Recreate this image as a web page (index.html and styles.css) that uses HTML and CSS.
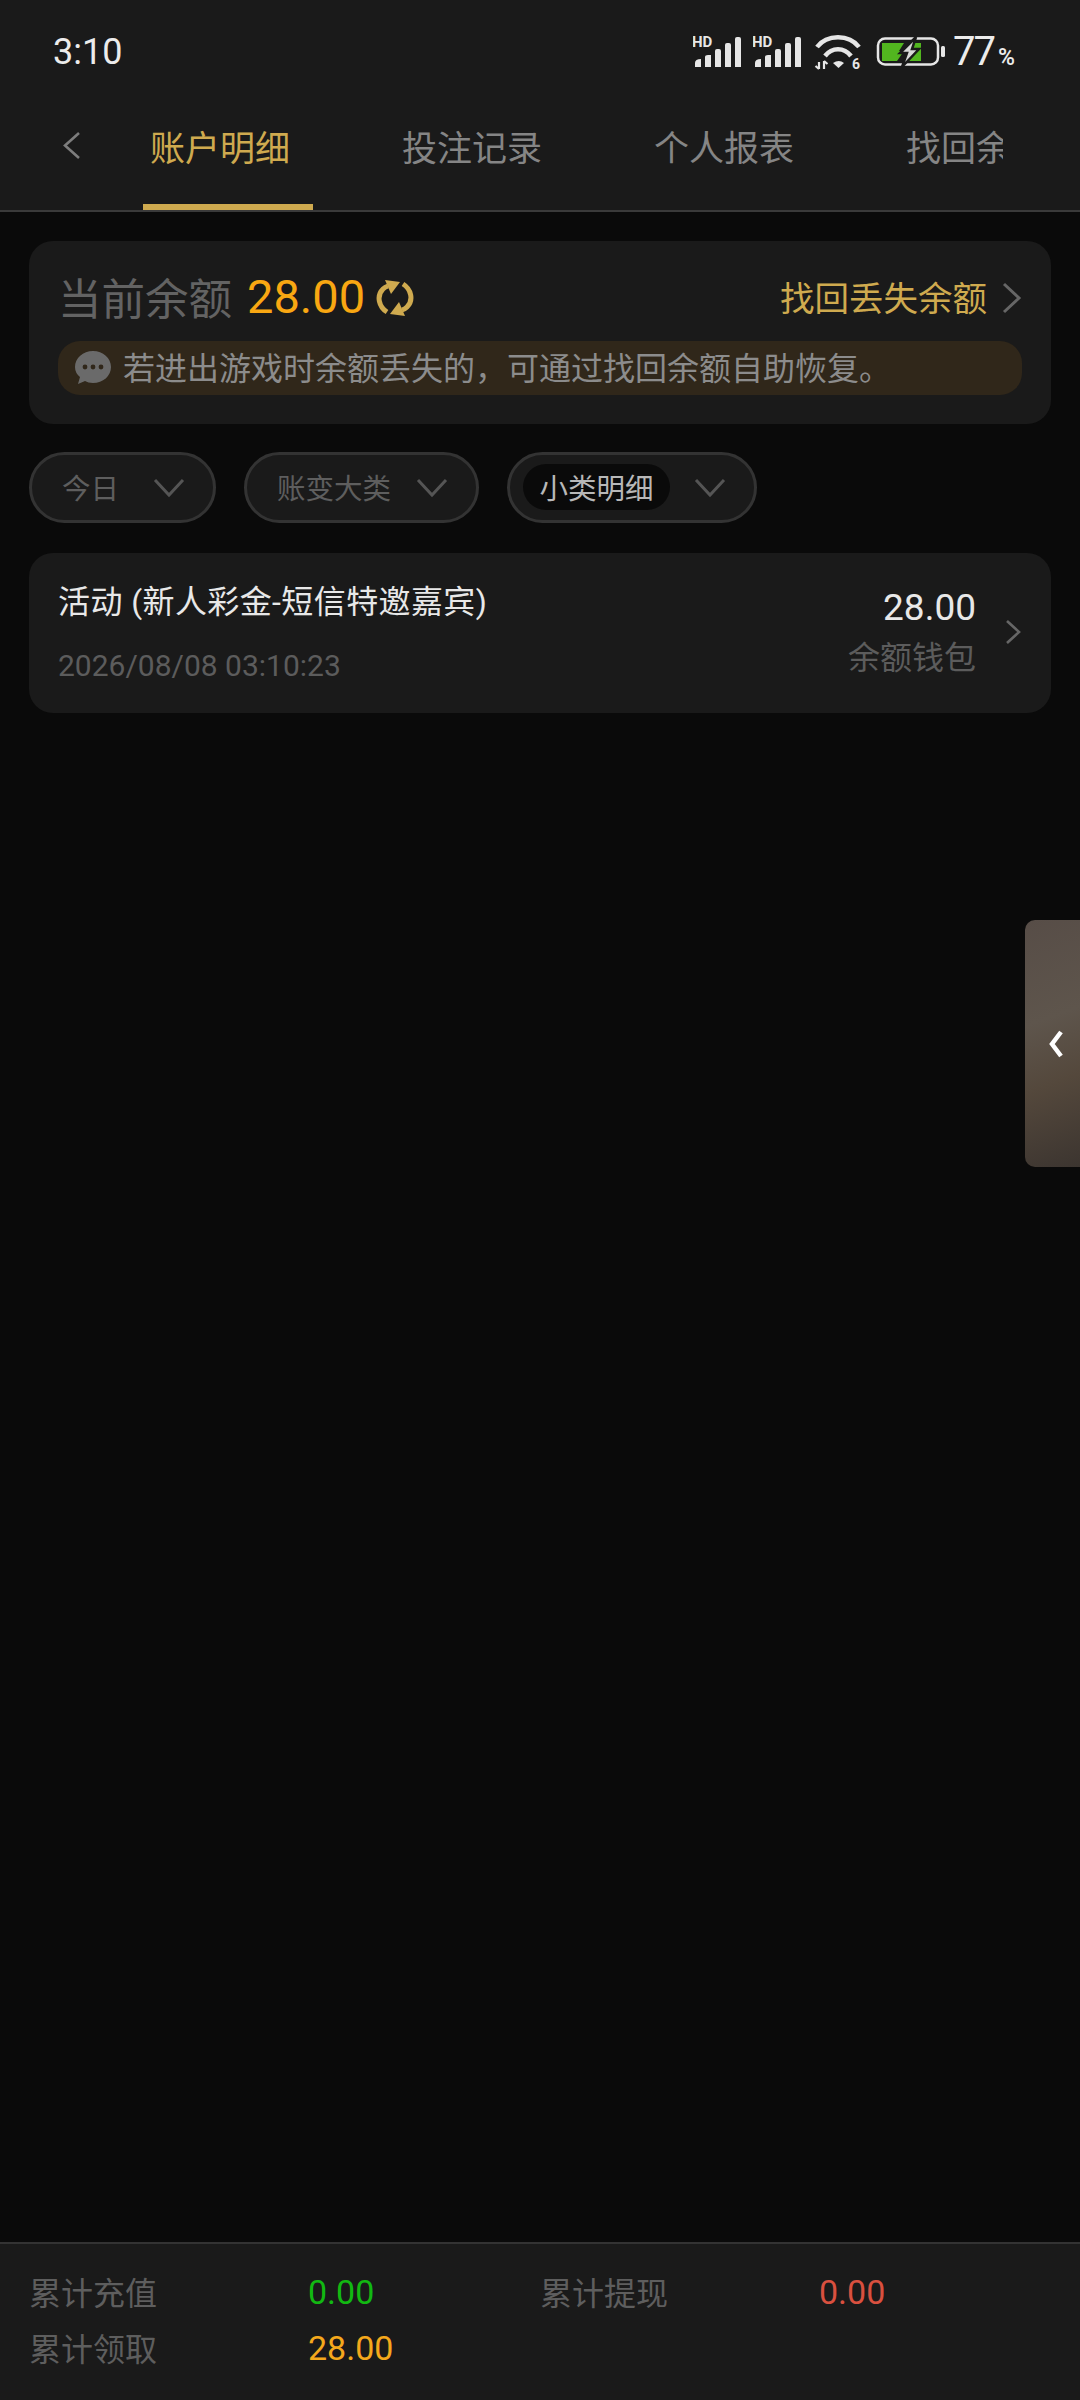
FILE: index.html
```html
<!DOCTYPE html>
<html lang="zh-CN">
<head>
<meta charset="UTF-8">
<title>账户明细</title>
<link rel="stylesheet" href="styles.css">
</head>
<body>
<div class="page">
	<header class="top">
		<div class="status">
			<span class="time">3:10</span>
			<div class="status-icons">
				<svg class="signal" width="50" height="44" viewBox="0 0 50 44">
					<text x="-1" y="17" class="hd">HD</text>
					<g fill="#e6e6e6">
						<path d="M2 33q0-4 6-4v8H2z"/>
						<path d="M12 27q0-2 3-2h3v12h-6z"/>
						<path d="M22 21q0-2 2-2h2q2 0 2 2v16h-6z"/>
						<path d="M32 15q0-2 2-2h2q2 0 2 2v22h-6z"/>
						<path d="M42 9q0-2 2-2h2q2 0 2 2v28h-6z"/>
					</g>
				</svg>
				<svg class="signal signal-last" width="50" height="44" viewBox="0 0 50 44">
					<text x="-1" y="17" class="hd">HD</text>
					<g fill="#e6e6e6">
						<path d="M2 33q0-4 6-4v8H2z"/>
						<path d="M12 27q0-2 3-2h3v12h-6z"/>
						<path d="M22 21q0-2 2-2h2q2 0 2 2v16h-6z"/>
						<path d="M32 15q0-2 2-2h2q2 0 2 2v22h-6z"/>
						<path d="M42 9q0-2 2-2h2q2 0 2 2v28h-6z"/>
					</g>
				</svg>
				<svg class="wifi" width="48" height="44" viewBox="0 0 48 44">
					<g fill="none" stroke="#e6e6e6" stroke-width="4.5">
						<path d="M3 17C13 4 35 4 45 17"/>
						<path d="M11 26C18 17 30 17 37 26"/>
					</g>
					<path d="M19 33q6-4 11 0l-5.5 5z" fill="#e6e6e6"/>
					<path d="M5 32v7M1.500 36l3.500 3M10 39v-8M10 31l3.500 3" stroke="#e6e6e6" stroke-width="2.200" fill="none"/>
					<text x="38" y="39" class="wifi-six">6</text>
				</svg>
				<svg class="battery" width="70" height="32" viewBox="0 0 70 32">
					<rect x="2" y="2.500" width="60" height="26" rx="7" fill="none" stroke="#e6e6e6" stroke-width="2.500"/>
					<path d="M6 7h22l-5 8h5l-7 10H6z" fill="#52b61f"/>
					<path d="M35 7h10v18H30z" fill="#52b61f"/>
					<path d="M40 1L24 17h7l-5 14 17-18h-7z" fill="#d8d8d8" stroke="#1a1a1a" stroke-width="2.500"/>
					<rect x="65" y="10" width="4" height="11" rx="1.500" fill="#e6e6e6"/>
				</svg>
				<span class="level">77<small>%</small></span>
			</div>
		</div>
		<nav class="nav">
			<svg class="back" width="19" height="29" viewBox="0 0 19 29"><path d="M17 2L3 14.500 17 27" fill="none" stroke="#7d7d7d" stroke-width="2.600"/></svg>
			<div class="tabs">
				<a class="tab active">账户明细</a>
				<a class="tab">投注记录</a>
				<a class="tab">个人报表</a>
				<a class="tab">找回余额</a>
			</div>
		</nav>
	</header>

	<main class="content">
		<section class="card balance">
			<div class="balance-row">
				<span class="balance-label">当前余额</span>
				<span class="balance-num">28.00</span>
				<svg class="refresh" width="38" height="38" viewBox="0 0 38 38">
					<g fill="none" stroke="#cfaa4f" stroke-width="5">
						<path d="M11 33C3 28 0 17 7 10q2-2 5-3"/>
						<path d="M27 5c8 5 11 16 4 23q-2 2-5 3"/>
					</g>
					<path d="M9 1l15 2-9 12z" fill="#cfaa4f"/>
					<path d="M29 37l-15-2 9-12z" fill="#cfaa4f"/>
				</svg>
				<a class="recover">找回丢失余额</a>
				<svg class="arrow-big" width="20" height="32" viewBox="0 0 20 32"><path d="M2 2l15 14L2 30" fill="none" stroke="#666" stroke-width="3"/></svg>
			</div>
			<p class="hint">
				<svg width="36" height="34" viewBox="0 0 36 34">
					<path d="M18 0c10 0 18 7 18 16s-8 16-18 16q-5 0-8-2l-7 3 2-7Q0 22 0 16C0 7 8 0 18 0z" fill="#6a6a6a"/>
					<g fill="#30271a"><circle cx="10" cy="16" r="2.400"/><circle cx="18" cy="16" r="2.400"/><circle cx="26" cy="16" r="2.400"/></g>
				</svg>
				<span>若进出游戏时余额丢失的，可通过找回余额自助恢复。</span>
			</p>
		</section>

		<div class="filters">
			<div class="filter filter-day"><span>今日</span><svg class="caret" width="32" height="20" viewBox="0 0 32 20"><path d="M2 2l14 15L30 2" /></svg></div>
			<div class="filter filter-type"><span>账变大类</span><svg class="caret" width="32" height="20" viewBox="0 0 32 20"><path d="M2 2l14 15L30 2" /></svg></div>
			<div class="filter filter-sub"><span class="picked">小类明细</span><svg class="caret" width="32" height="20" viewBox="0 0 32 20"><path d="M2 2l14 15L30 2" /></svg></div>
		</div>

		<section class="card record">
			<div class="record-left">
				<div class="record-title">活动 (新人彩金-短信特邀嘉宾)</div>
				<div class="record-date">2026/08/08 03:10:23</div>
			</div>
			<div class="record-right">
				<div class="record-num">28.00</div>
				<div class="record-wallet">余额钱包</div>
			</div>
			<svg class="arrow" width="17" height="26" viewBox="0 0 17 26"><path d="M2 2l12 11L2 24" fill="none" stroke="#666" stroke-width="2.600"/></svg>
		</section>
	</main>

	<footer class="totals">
		<div class="total"><span class="total-label">累计充值</span><span class="green">0.00</span></div>
		<div class="total"><span class="total-label">累计提现</span><span class="red">0.00</span></div>
		<div class="total"><span class="total-label">累计领取</span><span class="orange">28.00</span></div>
	</footer>

	<div class="side-tab">
		<svg width="16" height="30" viewBox="0 0 16 30"><path d="M13 3L4 15l9 12" fill="none" stroke="#fff" stroke-width="4.500"/></svg>
	</div>
</div>
</body>
</html>
```
FILE: styles.css
```css
* { box-sizing: border-box; }
body { margin: 0; background: #0a0a0a; font-family: Roboto, "Noto Sans CJK SC", sans-serif; }
.page { position: relative; width: 1080px; height: 2400px; display: flex; flex-direction: column; overflow: hidden; }

/* top */
.top { background: #1a1a1a; border-bottom: 2px solid #3a3a3a; }
.status { height: 86px; padding: 18px 65px 0 53px; display: flex; align-items: center; justify-content: space-between; }
.time { font-size: 36px; color: #ececec; }
.status-icons { display: flex; align-items: center; }
.signal { margin-right: 10px; }
.signal-last { margin-right: 11px; }
.wifi { margin-right: 14px; }
.hd { font: 700 15px Roboto, sans-serif; fill: #e6e6e6; }
.wifi-six { font: 700 14px Roboto, sans-serif; fill: #e6e6e6; }
.level { margin-left: 7px; font-size: 40px; color: #ececec; line-height: 1; letter-spacing: -2px; }
.level small { font-size: 23px; font-weight: 500; margin-left: 4px; letter-spacing: 0; }

.nav { height: 124px; display: flex; align-items: center; padding-left: 62px; }
.back { margin-bottom: 6px; }
.tabs { display: flex; gap: 82px; margin-left: 62px; width: 860px; overflow: hidden; height: 100%; }
.tab { flex: none; width: 170px; padding: 0 0 6px 7px; display: flex; align-items: center; font-size: 35px; color: #858585; white-space: nowrap; border-top: 6px solid transparent; border-bottom: 6px solid transparent; }
.tab.active { color: #cfaa4f; border-bottom-color: #cfaa4f; }

/* main */
.content { flex: 1; padding: 29px 29px 0; }
.card { background: #1a1a1a; border-radius: 24px; }
.balance { height: 183px; padding: 27px 29px 0; }
.balance-row { height: 56px; display: flex; align-items: center; }
.balance-label { font-size: 43.5px; color: #636363; }
.balance-num { margin-left: 15px; font-size: 47px; color: #f9a712; }
.refresh { margin: 4px 0 0 11px; }
.recover { margin-left: auto; font-size: 34.5px; color: #cfaa4f; }
.arrow-big { margin: 4px 0 0 15px; }
.hint { margin: 17px 0 0; height: 54px; padding-left: 17px; background: #30271a; border-radius: 22px; display: flex; align-items: center; font-size: 32px; color: #8c8c8c; }
.hint span { margin: 0 0 5px 12px; }

.filters { display: flex; gap: 28px; margin-top: 28px; }
.filter { height: 71px; background: #1a1a1a; border: 3px solid #333; border-radius: 36px; display: flex; align-items: center; justify-content: space-between; padding: 0 28px 0 30px; font-size: 28.5px; color: #5e5e5e; }
.filter > span { margin-bottom: 2px; }
.filter-day { width: 187px; }
.filter-type { width: 235px; }
.filter-sub { width: 250px; padding-left: 13px; }
.picked { background: #0a0a0a; color: #b8b8b8; height: 46px; width: 147px; border-radius: 23px; display: flex; align-items: center; justify-content: center; }
.caret { fill: none; stroke: #555; stroke-width: 3; }

.record { margin-top: 30px; height: 160px; padding: 0 29px; display: flex; align-items: center; }
.record-left { flex: 1; }
.record-title { font-size: 32px; color: #e8e8e8; line-height: 44px; letter-spacing: 0.4px; margin-top: 1px; }
.record-date { margin-top: 20px; font-size: 30px; color: #5c5c5c; line-height: 44px; }
.record-right { text-align: right; margin-right: 29px; }
.record-num { font-size: 37px; color: #e8e8e8; line-height: 44px; }
.record-wallet { margin-top: 6px; font-size: 32px; color: #5c5c5c; line-height: 44px; }
.arrow { margin-bottom: 2px; }

/* bottom */
.totals { height: 158px; background: #1a1a1a; border-top: 2px solid #333; padding: 20px 0 0 29px; display: grid; grid-template-columns: 511px 511px; grid-auto-rows: 56px; align-items: center; }
.total { display: flex; align-items: center; font-size: 34px; }
.total-label { width: 279px; color: #5e5e5e; font-size: 32px; margin-bottom: 2px; }
.green { color: #12b812; }
.red { color: #d9503f; }
.orange { color: #f5a81c; }

.side-tab { position: absolute; right: 0; top: 920px; width: 55px; height: 247px; border-radius: 10px 0 0 10px; background: linear-gradient(160deg, #574d47 0%, #5e554c 40%, #54483c 65%, #3c3530 100%); display: flex; align-items: center; padding-left: 23px; }
```
